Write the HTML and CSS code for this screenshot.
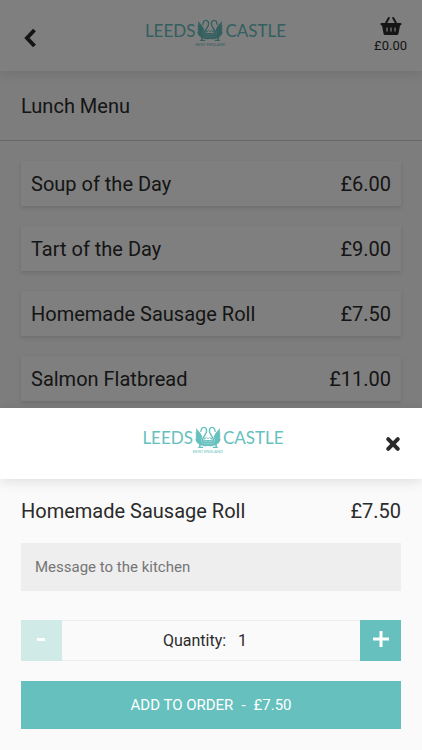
FILE: index.html
```html
<!DOCTYPE html>
<html lang="en">
<head>
<meta charset="utf-8">
<meta name="viewport" content="width=device-width, initial-scale=1">
<title>Leeds Castle - Lunch Menu</title>
<link rel="stylesheet" href="styles.css">
</head>
<body>
<svg class="defs" aria-hidden="true">
  <symbol id="swan" viewBox="0 0 38 66">
    <path fill="currentColor" d="M3 5C9 13 17 19 20 28C22 33 22 37 24 41L38 40V57C29 60 21 58 17 55L16 60H24V64H7L12 60V53C5 49 1 43 1 36L4 36L1 27L4 28L1 18L4 19Z"/>
    <path fill="none" stroke="currentColor" stroke-width="4" stroke-linecap="round" d="M22 42C20 34 34 24 34 13C34 1 20 1 19 9L17 15"/>
    <path fill="none" stroke="#fff" stroke-width="1.2" opacity=".7" d="M25 45H38M26 51H38M18 33C19 42 20 48 25 54"/>
    <path fill="none" stroke="currentColor" stroke-width="2.400" d="M27 40V34L30 37L33 32L38 37"/>
  </symbol>
  <symbol id="swans" viewBox="0 0 76 66">
    <use href="#swan" width="38" height="66"/>
    <use href="#swan" width="38" height="66" transform="translate(76 0) scale(-1 1)"/>
  </symbol>
</svg>

<header class="bar bar-page">
  <button class="icon-button" type="button" aria-label="Back">
    <svg width="13" height="20" viewBox="0 0 13 20"><path class="chevron" d="M10.500 2L3 10L10.500 18"/></svg>
  </button>
  <div class="logo">
    <span>LEEDS</span>
    <svg class="crest"><use href="#swans"/></svg>
    <span>CASTLE</span>
    <small>KENT ENGLAND</small>
  </div>
  <a class="basket" href="#basket">
    <svg width="22" height="20" viewBox="0 0 22 20" aria-hidden="true">
      <path class="handle" d="M5.500 8L8.800 2M16.500 8L13.200 2"/>
      <path fill="currentColor" fill-rule="evenodd" d="M1.500 7H20.500Q21.500 7 21.500 8T20.500 9.400H20L18.500 17.500Q18.200 19 16.800 19H5.200Q3.800 19 3.500 17.500L2 9.400H1.500Q.5 9.400 .5 8T1.500 7ZM6.400 11.500V15.500H7.600V11.500ZM10.400 11.500V15.500H11.600V11.500ZM14.400 11.500V15.500H15.600V11.500Z"/>
    </svg>
    <span>£0.00</span>
  </a>
</header>

<main>
  <h1 class="title">Lunch Menu</h1>
  <ul class="menu">
    <li class="item"><span>Soup of the Day</span><span>£6.00</span></li>
    <li class="item"><span>Tart of the Day</span><span>£9.00</span></li>
    <li class="item"><span>Homemade Sausage Roll</span><span>£7.50</span></li>
    <li class="item"><span>Salmon Flatbread</span><span>£11.00</span></li>
  </ul>
</main>

<div class="overlay">
  <section class="sheet" role="dialog" aria-labelledby="dish">
    <div class="bar bar-sheet">
      <div class="logo">
        <span>LEEDS</span>
        <svg class="crest"><use href="#swans"/></svg>
        <span>CASTLE</span>
        <small>KENT ENGLAND</small>
      </div>
      <button class="icon-button close" type="button" aria-label="Close">
        <svg width="16" height="16" viewBox="0 0 16 16"><path class="cross" d="M3.200 3.200L12.800 12.800M12.800 3.200L3.200 12.800"/></svg>
      </button>
    </div>
    <form class="order">
      <div class="dish"><h2 id="dish">Homemade Sausage Roll</h2><span>£7.50</span></div>
      <input class="message" type="text" placeholder="Message to the kitchen" aria-label="Message to the kitchen">
      <div class="quantity">
        <button class="step" type="button" aria-label="Decrease quantity" disabled>
          <svg width="16" height="16" viewBox="0 0 16 16"><path class="minus" d="M3 8.500H11"/></svg>
        </button>
        <div class="amount"><span>Quantity:</span><output>1</output></div>
        <button class="step" type="button" aria-label="Increase quantity">
          <svg width="16" height="16" viewBox="0 0 16 16"><path class="plus" d="M0 8H16M8 0V16"/></svg>
        </button>
      </div>
      <button class="add" type="submit"><span>ADD TO ORDER</span><span>-</span><span>£7.50</span></button>
    </form>
  </section>
</div>
</body>
</html>
```
FILE: styles.css
```css
* {
  box-sizing: border-box;
}

body {
  margin: 0;
  background: #fafafa;
  color: #2b2b2b;
  font: 16px/24px Roboto, sans-serif;
}

button {
  border: 0;
  padding: 0;
  background: none;
  color: inherit;
  font: inherit;
}

.defs {
  position: absolute;
  width: 0;
  height: 0;
}

svg {
  display: block;
}

.bar {
  display: grid;
  grid-template-columns: 1fr auto 1fr;
  align-items: center;
  height: 71px;
  background: #fff;
  box-shadow: 0 2px 12px rgba(0, 0, 0, 0.12);
}

.bar-page {
  padding: 4px 15px 0 24px;
}

.bar-sheet {
  padding: 0 21px 0 25px;
}

.bar-sheet .logo {
  grid-column: 2;
}

.icon-button {
  justify-self: start;
}

.close {
  justify-self: end;
}

.chevron {
  fill: none;
  stroke: currentColor;
  stroke-width: 4;
}

.cross {
  stroke: currentColor;
  stroke-width: 4;
  stroke-linecap: round;
}

.logo {
  display: grid;
  grid-template-columns: auto 26px auto;
  column-gap: 2px;
  align-items: center;
  align-self: start;
  padding-top: 15px;
  color: #66c0be;
  font: 17px/22px Lato, sans-serif;
}

.bar-sheet .logo {
  padding-top: 18px;
}

.crest {
  width: 26px;
  height: 23px;
}

.logo small {
  grid-column: 2;
  justify-self: center;
  font-size: 4px;
  line-height: 5px;
  white-space: nowrap;
}

.basket {
  display: grid;
  justify-items: center;
  justify-self: end;
  padding-bottom: 4px;
  color: inherit;
  font-size: 13px;
  line-height: 20px;
  text-decoration: none;
}

.handle {
  fill: none;
  stroke: currentColor;
  stroke-width: 2;
  stroke-linecap: round;
}

.title {
  margin: 0;
  padding: 23px 21px 22px;
  border-bottom: 1px solid #d0d0d0;
  font-size: 20px;
  font-weight: 400;
  line-height: 24px;
}

.menu {
  display: grid;
  gap: 20px;
  margin: 0;
  padding: 20px 21px;
  list-style: none;
}

.item {
  display: flex;
  justify-content: space-between;
  align-items: center;
  height: 45px;
  padding: 0 10px;
  background: #fff;
  box-shadow: 0 2px 4px rgba(0, 0, 0, 0.12);
  font-size: 20px;
}

.overlay {
  position: fixed;
  inset: 0;
  display: flex;
  flex-direction: column;
  justify-content: flex-end;
  background: rgba(0, 0, 0, 0.5);
}

.sheet {
  background: #fafafa;
}

.order {
  display: grid;
  padding: 20px 21px 21px;
}

.dish {
  display: flex;
  justify-content: space-between;
  margin-bottom: 20px;
  font-size: 20px;
}

.dish h2 {
  margin: 0;
  font: inherit;
}

.message {
  width: 100%;
  height: 48px;
  margin-bottom: 29px;
  border: 0;
  padding: 0 14px;
  background: #eee;
  color: inherit;
  font: inherit;
  font-size: 15px;
}

.message::placeholder {
  color: #757575;
}

.quantity {
  display: flex;
  height: 41px;
  margin-bottom: 20px;
}

.step {
  display: grid;
  place-items: center;
  width: 41px;
  padding-bottom: 4px;
  background: #66c0be;
  color: #fff;
}

.step:disabled {
  background: #d0eae7;
}

.plus,
.minus {
  stroke: currentColor;
  stroke-width: 3;
}

.amount {
  display: flex;
  flex: 1;
  justify-content: center;
  align-items: center;
  gap: 12px;
  padding-right: 12px;
  border: 1px solid #eee;
  border-width: 1px 0;
}

.add {
  display: flex;
  justify-content: center;
  align-items: center;
  gap: 8px;
  height: 48px;
  background: #66c0be;
  color: #fff;
  font-size: 15px;
}
```
